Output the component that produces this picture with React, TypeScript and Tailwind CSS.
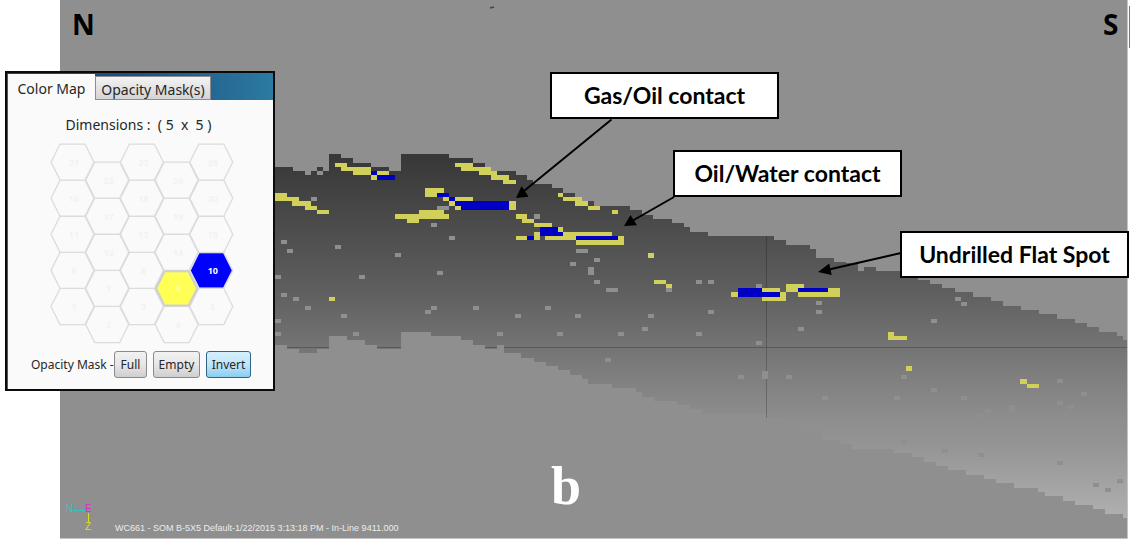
import React from "react";

const WIDTH = 1130;
const HEIGHT = 541;

const place = (x: number, y: number) => ({
  left: `${(x / WIDTH) * 100}%`,
  top: `${(y / HEIGHT) * 100}%`,
});

type Step = [number, number];
type Box = [number, number, number, number];

// Each step is [x where it begins, y of the edge].
const topEdge: Step[] = [
  [275, 167], [293, 171], [305, 175], [311, 171], [317, 167], [323, 171], [329, 154], [341, 158],
  [353, 163], [371, 167], [389, 171], [401, 154], [449, 158], [473, 163], [485, 167], [491, 171],
  [516, 175], [527, 180], [533, 184], [552, 188], [563, 193], [575, 197], [582, 201], [594, 206],
  [630, 210], [642, 215], [653, 219], [672, 223], [684, 227], [690, 232], [708, 236], [774, 240],
  [786, 245], [810, 249], [816, 258], [834, 262], [846, 263], [858, 271], [864, 267], [876, 271],
  [906, 276], [918, 280], [930, 284], [942, 288], [955, 292], [973, 297], [991, 301], [1003, 306],
  [1021, 310], [1039, 314], [1057, 319], [1075, 323], [1087, 327], [1099, 332], [1117, 336], [1123, 340],
];

const bottomEdge: Step[] = [
  [275, 345], [287, 349], [299, 353], [317, 349], [329, 336], [347, 340], [365, 345], [377, 349],
  [401, 332], [431, 336], [461, 340], [473, 345], [485, 349], [497, 345], [504, 353], [521, 358],
  [534, 362], [546, 366], [558, 370], [570, 375], [582, 379], [588, 384], [612, 388], [636, 392],
  [642, 397], [654, 401], [677, 405], [690, 409], [702, 414], [766, 418], [782, 423], [800, 431],
  [822, 440], [840, 444], [852, 449], [894, 453], [912, 457], [924, 462], [936, 466], [948, 470],
  [966, 475], [984, 479], [996, 483], [1014, 488], [1038, 492], [1045, 496], [1063, 501], [1075, 505],
  [1093, 509], [1105, 514], [1123, 518],
];

const walk = (steps: Step[], end: number): Step[] =>
  steps.flatMap(([x, y], i): Step[] => [[x, y], [i + 1 < steps.length ? steps[i + 1][0] : end, y]]);

const bodyPoints = [...walk(topEdge, 1127), ...walk(bottomEdge, 1127).reverse()]
  .map((p) => p.join(","))
  .join(" ");

// Boxes are [left, top, right, bottom].
const yellow: Box[] = [
  [275, 193, 287, 201], [287, 197, 299, 201], [292, 201, 311, 206], [305, 206, 317, 210], [317, 210, 329, 214],
  [335, 163, 347, 167], [341, 167, 371, 171], [353, 171, 371, 175], [371, 175, 377, 180], [377, 171, 389, 175],
  [425, 188, 444, 193], [425, 193, 437, 197], [443, 197, 449, 201], [449, 201, 455, 206], [455, 197, 473, 201],
  [455, 206, 461, 210], [509, 201, 516, 210], [395, 214, 449, 219], [419, 210, 444, 214], [407, 219, 419, 223],
  [455, 163, 473, 167], [461, 167, 491, 171], [479, 171, 497, 175], [491, 175, 509, 180], [503, 180, 516, 184],
  [558, 193, 563, 197], [563, 197, 582, 201], [575, 201, 588, 206], [588, 206, 600, 210], [612, 210, 618, 214],
  [516, 214, 527, 219], [522, 219, 534, 223], [534, 223, 552, 227], [558, 227, 563, 232], [534, 232, 540, 240],
  [563, 232, 612, 236], [545, 236, 576, 240], [618, 236, 624, 245], [576, 240, 624, 245], [516, 236, 527, 240],
  [648, 253, 654, 258], [329, 297, 335, 301], [654, 280, 666, 284], [666, 284, 672, 288], [731, 292, 738, 297],
  [762, 288, 780, 292], [762, 297, 786, 301], [780, 292, 786, 297], [786, 284, 804, 288], [786, 288, 798, 292],
  [828, 288, 840, 292], [798, 292, 840, 297], [888, 332, 894, 340], [894, 336, 907, 340], [906, 366, 912, 371],
  [1020, 379, 1027, 384], [1027, 384, 1039, 388],
];

const blue: Box[] = [
  [371, 171, 377, 175], [377, 175, 395, 180], [437, 193, 449, 197], [449, 197, 455, 201], [455, 201, 509, 206],
  [461, 206, 509, 210], [540, 227, 558, 232], [540, 232, 563, 236], [527, 236, 534, 240], [576, 236, 618, 240],
  [738, 288, 762, 297], [762, 292, 780, 297], [798, 288, 828, 292],
];

const grey: Box[] = [
  [317, 171, 323, 175], [534, 214, 540, 219], [437, 206, 449, 210], [576, 249, 588, 253], [588, 267, 594, 275],
  [606, 288, 618, 292], [762, 371, 768, 379], [1009, 405, 1015, 413],
];

// Single cells, given by their centres.
const specks: Step[] = [
  [314, 199], [284, 242], [290, 251], [338, 247], [398, 255], [434, 225], [452, 238], [597, 260], [573, 264],
  [278, 277], [362, 277], [440, 273], [284, 295], [296, 299], [308, 308], [278, 321], [278, 334], [344, 316],
  [356, 334], [428, 312], [434, 308], [476, 308], [518, 316], [548, 308], [500, 334], [560, 334], [597, 282],
  [669, 290], [699, 282], [711, 282], [759, 286], [578, 316], [651, 316], [645, 329], [621, 334], [699, 334],
  [711, 312], [759, 343], [819, 303], [819, 312], [801, 329], [958, 299], [964, 304], [934, 321], [904, 377],
  [934, 390], [897, 398], [964, 398], [1060, 381], [1084, 394], [608, 360], [741, 377], [789, 377], [825, 398],
  [1071, 407], [1060, 403], [988, 411], [981, 416], [904, 442], [945, 451], [981, 455], [1060, 463],
  [1096, 485], [1108, 490], [1120, 481],
];

function Cells({ boxes, fill }: { boxes: Box[]; fill: string }) {
  return (
    <g fill={fill}>
      {boxes.map(([l, t, r, b]) => (
        <rect key={`${l}-${t}-${r}`} x={l} y={t} width={r - l} height={b - t} />
      ))}
    </g>
  );
}

function SeismicSection() {
  return (
    <svg viewBox="0 0 1130 541" className="block h-auto w-full" role="img" aria-label="Seismic in-line section">
      <defs>
        <linearGradient id="depth" gradientUnits="userSpaceOnUse" x1="0" y1="154" x2="0" y2="518">
          <stop offset="0" stopColor="#373737" />
          <stop offset="0.37" stopColor="#5e5e5e" />
          <stop offset="0.53" stopColor="#747474" />
          <stop offset="0.73" stopColor="#8e8e8e" />
          <stop offset="0.79" stopColor="#939393" />
          <stop offset="1" stopColor="#b0b0b0" />
        </linearGradient>
        <clipPath id="body">
          <polygon points={bodyPoints} />
        </clipPath>
      </defs>
      <rect x="60" y="0" width="1067" height="538" fill="#8f8f8f" />
      <path d="M1127.5 0V538.5H60" fill="none" stroke="#c4c4c4" />
      <path d="M1129.5 6V48" stroke="#777777" />
      <path d="M490 8l4-1" stroke="#444444" strokeWidth="1.5" />
      <g shapeRendering="crispEdges">
        <polygon points={bodyPoints} fill="url(#depth)" />
        <g clipPath="url(#body)" stroke="#000000" strokeOpacity="0.22">
          <path d="M275 347.5H1127M766.5 230V418" />
        </g>
        <g fill="#8f8f8f">
          {specks.map(([x, y]) => (
            <rect key={`${x}-${y}`} x={x - 3} y={y - 2} width="6" height="4" />
          ))}
        </g>
        <Cells boxes={grey} fill="#8f8f8f" />
        <Cells boxes={yellow} fill="#d0d05a" />
        <Cells boxes={blue} fill="#0000c4" />
      </g>
      <g stroke="#000000" strokeWidth="2">
        <path d="M611.500 119.500L524 191M674 197L632 221M901 253L829 269.500" fill="none" />
      </g>
      <path d="M516 198L521.700 186L528.500 196.700ZM624 226L630.500 215L637 225.300ZM818 272L829.300 263.500L831.700 275Z" />
      <path d="M73 510.500H86" stroke="#35c4c4" />
      <path d="M88.500 513V522" stroke="#dede20" />
    </svg>
  );
}

const callouts = [
  { text: "Gas/Oil contact", x: 550, y: 72 },
  { text: "Oil/Water contact", x: 673, y: 150 },
  { text: "Undrilled Flat Spot", x: 900, y: 231 },
];

const hexPoints = (cx: number, cy: number, r: number) => {
  const h = r * 0.84;
  const s = r * 0.58;
  return `${cx - r},${cy} ${cx - s},${cy - h} ${cx + s},${cy - h} ${cx + r},${cy} ${cx + s},${cy + h} ${cx - s},${cy + h}`;
};

const neurons = Array.from({ length: 25 }, (_, i) => {
  const col = i % 5;
  const row = Math.floor(i / 5);
  return { n: i + 1, cx: 22.5 + col * 34.7, cy: 163.5 - row * 36.1 + (col % 2 ? 18 : 0) };
});

function HexMap() {
  return (
    <svg viewBox="0 0 184 201" className="mx-auto block w-[184px]" role="img" aria-label="5 by 5 color map">
      {neurons.map(({ n, cx, cy }) => (
        <polygon key={n} points={hexPoints(cx, cy, 21.5)} fill="#fafafa" stroke="#dcdcdc" strokeWidth="1.300" />
      ))}
      <polygon points={hexPoints(neurons[8].cx, neurons[8].cy, 20.5)} fill="#ffff55" stroke="#cfcfcf" strokeWidth="2" />
      <polygon points={hexPoints(neurons[9].cx, neurons[9].cy, 20.5)} fill="#0000ff" />
      {neurons.map(({ n, cx, cy }) => (
        <text
          key={n}
          x={cx + 1.5}
          y={cy + 3.5}
          textAnchor="middle"
          className="font-['Open_Sans',sans-serif] text-[9px] font-bold"
          fill={n === 10 ? "#ffffff" : n === 9 ? "#ffffa8" : "#f2f2f2"}
        >
          {n}
        </text>
      ))}
    </svg>
  );
}

const maskButton = "h-[27px] rounded-[3px] border text-[12px] leading-4";
const plainButton = "border-[#8a8a8a] bg-linear-to-b from-[#f2f2f2] via-[#e6e6e6] to-[#cfcfcf]";

function ColorMapPanel() {
  return (
    <section
      style={place(5, 71)}
      className="absolute flex h-[320px] w-[270px] flex-col border-2 border-[#0b0b0b] bg-[#fafafa] font-['Noto_Sans',sans-serif] text-[#262626]"
    >
      <div role="tablist" className="flex h-[27px] items-end bg-linear-to-r from-[#1d4472] via-[#1f5080] to-[#2b7ba3] text-[14px]">
        <button type="button" role="tab" aria-selected="true" className="h-[26px] w-[88px] border-l border-[#2d5f92] bg-[#fafafa] pt-1 leading-5">
          Color Map
        </button>
        <button
          type="button"
          role="tab"
          aria-selected="false"
          className="h-6 w-[116px] border border-[#8d8d8d] bg-linear-to-b from-[#f3f3f3] to-[#d4d4d4] pt-1 leading-4"
        >
          Opacity Mask(s)
        </button>
      </div>
      <div className="flex grow flex-col border-l border-[#2d5f92]">
        <p className="mt-[15px] pr-1 text-center text-[14px] leading-5 whitespace-pre">Dimensions :  ( 5  x  5 )</p>
        <div className="mt-2 pl-1">
          <HexMap />
        </div>
        <div className="mt-[7px] flex items-center pl-[23px] text-[12px]">
          <span className="w-[83px] whitespace-nowrap">Opacity Mask -</span>
          <button type="button" className={`${maskButton} ${plainButton} w-[33px]`}>Full</button>
          <button type="button" className={`${maskButton} ${plainButton} ml-1.5 w-[47px]`}>Empty</button>
          <button
            type="button"
            className={`${maskButton} ml-1.5 w-[45px] border-[#2f6486] bg-linear-to-b from-[#d5effc] via-[#bfe5fa] to-[#8ccdf0]`}
          >
            Invert
          </button>
        </div>
      </div>
    </section>
  );
}

export default function App() {
  return (
    <main className="relative w-full overflow-hidden bg-white text-black">
      <SeismicSection />
      <span style={place(72, 8)} className="absolute font-['Noto_Sans',sans-serif] text-[28px] leading-8 font-bold">N</span>
      <span style={place(1103, 8)} className="absolute font-['Noto_Sans',sans-serif] text-[28px] leading-8 font-bold">S</span>
      {callouts.map(({ text, x, y }) => (
        <div
          key={text}
          style={place(x, y)}
          className="absolute flex h-[47px] w-[229px] items-center justify-center border-2 border-black bg-white font-['Lato',sans-serif] text-[23px] font-bold whitespace-nowrap"
        >
          {text}
        </div>
      ))}
      <ColorMapPanel />
      <span style={place(551, 456)} className="absolute font-['Liberation_Serif',serif] text-[54px] leading-[60px] font-bold text-white">
        b
      </span>
      <span style={place(66, 503)} className="absolute font-['Liberation_Sans',sans-serif] text-[10px] leading-3 text-[#35c4c4]">N</span>
      <span style={place(85, 503)} className="absolute font-['Liberation_Sans',sans-serif] text-[10px] leading-3 text-[#d030c8]">E</span>
      <span style={place(85, 521)} className="absolute font-['Liberation_Sans',sans-serif] text-[10px] leading-3 text-[#dede20]">Z</span>
      <p style={place(115, 522)} className="absolute font-['Liberation_Sans',sans-serif] text-[9px] leading-3 whitespace-nowrap text-[#ececec]">
        WC661 - SOM B-5X5 Default-1/22/2015 3:13:18 PM - In-Line 9411.000
      </p>
    </main>
  );
}
